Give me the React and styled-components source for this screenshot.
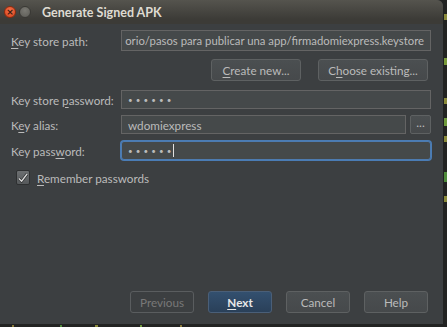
import React from "react";
import styled, { createGlobalStyle } from "styled-components";

const Global = createGlobalStyle`
  html, body { margin: 0; padding: 0; background: #232323; }
  #root { width: 447px; height: 327px; overflow: hidden; }
  * { box-sizing: border-box; }
`;

const Screen = styled.div`
  width: 447px;
  height: 327px;
  background: #222322;
  font-family: Lato, "Noto Sans", sans-serif;
  font-size: 11.7px;
  color: #bbbbbb;
  position: relative;
`;

const Dialog = styled.div`
  width: 443px;
  height: 324px;
  background: #3c3f41;
  border-top-right-radius: 6px;
  overflow: hidden;
  display: flex;
  flex-direction: column;
`;

const TitleBar = styled.div`
  height: 24px;
  flex: none;
  display: flex;
  align-items: center;
  padding-left: 4px;
  background: linear-gradient(#55544e, #3c3b37 80%);
  gap: 3px;
`;

const WinBtn = styled.div`
  width: 12px;
  height: 12px;
  border-radius: 50%;
  background: ${(p) =>
    p.$close
      ? "radial-gradient(circle at 50% 35%, #f2704a, #d9441c)"
      : "radial-gradient(circle at 50% 35%, #7a7973, #5c5b56)"};
  border: 1px solid ${(p) => (p.$close ? "#8c2c10" : "#3a3935")};
  display: flex;
  align-items: center;
  justify-content: center;
  color: #3a1a0e;
  font-size: 9px;
  font-weight: bold;
  line-height: 1;
  font-family: "DejaVu Sans", sans-serif;
`;

const Title = styled.div`
  margin-left: 8px;
  font-weight: bold;
  color: #dfdbd2;
  font-size: 12.5px;
`;

const Body = styled.div`
  flex: 1;
  display: flex;
  flex-direction: column;
  padding: 6px 12px 11px 11px;
`;

const Row = styled.div`
  display: flex;
  align-items: center;
  margin-top: ${(p) => p.$mt || 0}px;
`;

const Label = styled.div`
  width: 110px;
  flex: none;
  white-space: nowrap;
`;

const U = styled.span`
  text-decoration: underline;
  text-underline-offset: 2px;
`;

const Input = styled.div`
  flex: 1;
  height: ${(p) => p.$h || 19}px;
  background: #45494a;
  border: 1px solid ${(p) => (p.$focus ? "#4d7bb0" : "#646464")};
  box-shadow: ${(p) => (p.$focus ? "0 0 0 1px #4a7cb5" : "none")};
  border-radius: ${(p) => (p.$focus ? "3px" : "0")};
  display: flex;
  align-items: center;
  justify-content: ${(p) => (p.$end ? "flex-end" : "flex-start")};
  padding: 0 6px;
  overflow: hidden;
  white-space: nowrap;
  color: #bbbbbb;
  font-size: ${(p) => (p.$end ? "11.3px" : "inherit")};
`;

const Dots = styled.span`
  font-size: 8px;
  letter-spacing: 3.1px;
  color: #bbbbbb;
`;

const Caret = styled.span`
  display: inline-block;
  width: 1px;
  height: 13px;
  background: #e0e0e0;
  margin-left: -1px;
`;

const ButtonsRow = styled.div`
  display: flex;
  justify-content: flex-end;
  gap: 17px;
  padding-right: 3px;
  margin-top: 8px;
`;

const Button = styled.div`
  height: 22px;
  width: ${(p) => p.$w}px;
  border-radius: 3px;
  border: 1px solid ${(p) => (p.$primary ? "#4a5f78" : p.$disabled ? "#5a5d5f" : "#5e6162")};
  background: ${(p) =>
    p.$primary
      ? "linear-gradient(#33506f, #2a4059)"
      : p.$disabled
      ? "transparent"
      : "linear-gradient(#4b4f51, #46494b)"};
  color: ${(p) => (p.$primary ? "#e8e8e8" : p.$disabled ? "#787878" : "#bbbbbb")};
  font-weight: ${(p) => (p.$primary ? "bold" : "normal")};
  display: flex;
  align-items: center;
  justify-content: center;
  white-space: nowrap;
  flex: none;
`;

const SmallBtn = styled(Button)`
  width: 21px;
  height: 19px;
  margin-left: 4px;
  padding-bottom: 4px;
  font-size: 12px;
  border-radius: 2px;
`;

const CheckRow = styled.div`
  display: flex;
  align-items: center;
  margin-top: 10px;
  padding-left: 5px;
  gap: 7px;
`;

const Box = styled.div`
  width: 14px;
  height: 15px;
  border: 1px solid #2e3031;
  border-radius: 2px;
  background: linear-gradient(#6c6f71, #56595b);
  display: flex;
  align-items: center;
  justify-content: center;
`;

const Spacer = styled.div`
  flex: 1;
`;

const Footer = styled.div`
  display: flex;
  justify-content: flex-end;
  gap: 14px;
  padding-right: 3px;
`;

const Strip = styled.div`
  position: absolute;
  left: ${(p) => p.$x}px;
  top: ${(p) => p.$y}px;
  width: ${(p) => p.$w}px;
  height: ${(p) => p.$h}px;
  background: ${(p) => p.$c};
`;

const marks = [
  [444, 14, 3, 6, "#8a8a3a"],
  [444, 58, 3, 7, "#7a9a3a"],
  [444, 98, 3, 6, "#8a8a3a"],
  [444, 118, 3, 8, "#6f9a3c"],
  [444, 136, 3, 6, "#8a8a3a"],
  [444, 172, 3, 10, "#4e8a3a"],
  [444, 196, 3, 6, "#8a8a3a"],
  [12, 325, 2, 2, "#8a7a3a"],
  [60, 325, 2, 2, "#4e8a3a"],
  [95, 325, 3, 2, "#8a8a3a"],
  [140, 325, 2, 2, "#6f9a3c"],
  [180, 325, 2, 2, "#8a7a3a"],
];

export default function App() {
  return (
    <Screen>
      <Global />
      <Dialog>
        <TitleBar>
          <WinBtn $close>×</WinBtn>
          <WinBtn />
          <Title>Generate Signed APK</Title>
        </TitleBar>
        <Body>
          <Row>
            <Label>
              <U>K</U>ey store path:
            </Label>
            <Input $h={21} $end>
              orio/pasos para publicar una app/firmadomiexpress.keystore
            </Input>
          </Row>
          <ButtonsRow>
            <Button $w={90}>
              <U>C</U>reate new...
            </Button>
            <Button $w={110}>
              C<U>h</U>oose existing...
            </Button>
          </ButtonsRow>
          <Row $mt={9}>
            <Label>
              Key store <U>p</U>assword:
            </Label>
            <Input>
              <Dots>••••••</Dots>
            </Input>
          </Row>
          <Row $mt={6}>
            <Label>
              K<U>e</U>y alias:
            </Label>
            <Input>wdomiexpress</Input>
            <SmallBtn $w={21}>...</SmallBtn>
          </Row>
          <Row $mt={7}>
            <Label>
              Key pass<U>w</U>ord:
            </Label>
            <Input $focus>
              <Dots>••••••</Dots>
              <Caret />
            </Input>
          </Row>
          <CheckRow>
            <Box>
              <svg width="13" height="12" viewBox="0 0 13 12">
                <path d="M2 6.5 L5 9.5 L11 1.5" fill="none" stroke="#2a2c2d" strokeWidth="3" />
                <path d="M2 6.5 L5 9.5 L11 1.5" fill="none" stroke="#d8d8d8" strokeWidth="1.6" />
              </svg>
            </Box>
            <span>
              <U>R</U>emember passwords
            </span>
          </CheckRow>
          <Spacer />
          <Footer>
            <Button $w={64} $disabled>
              Previous
            </Button>
            <Button $w={64} $primary>
              <U>N</U>ext
            </Button>
            <Button $w={64}>Cancel</Button>
            <Button $w={64}>Help</Button>
          </Footer>
        </Body>
      </Dialog>
      {marks.map(([x, y, w, h, c], i) => (
        <Strip key={i} $x={x} $y={y} $w={w} $h={h} $c={c} />
      ))}
    </Screen>
  );
}
